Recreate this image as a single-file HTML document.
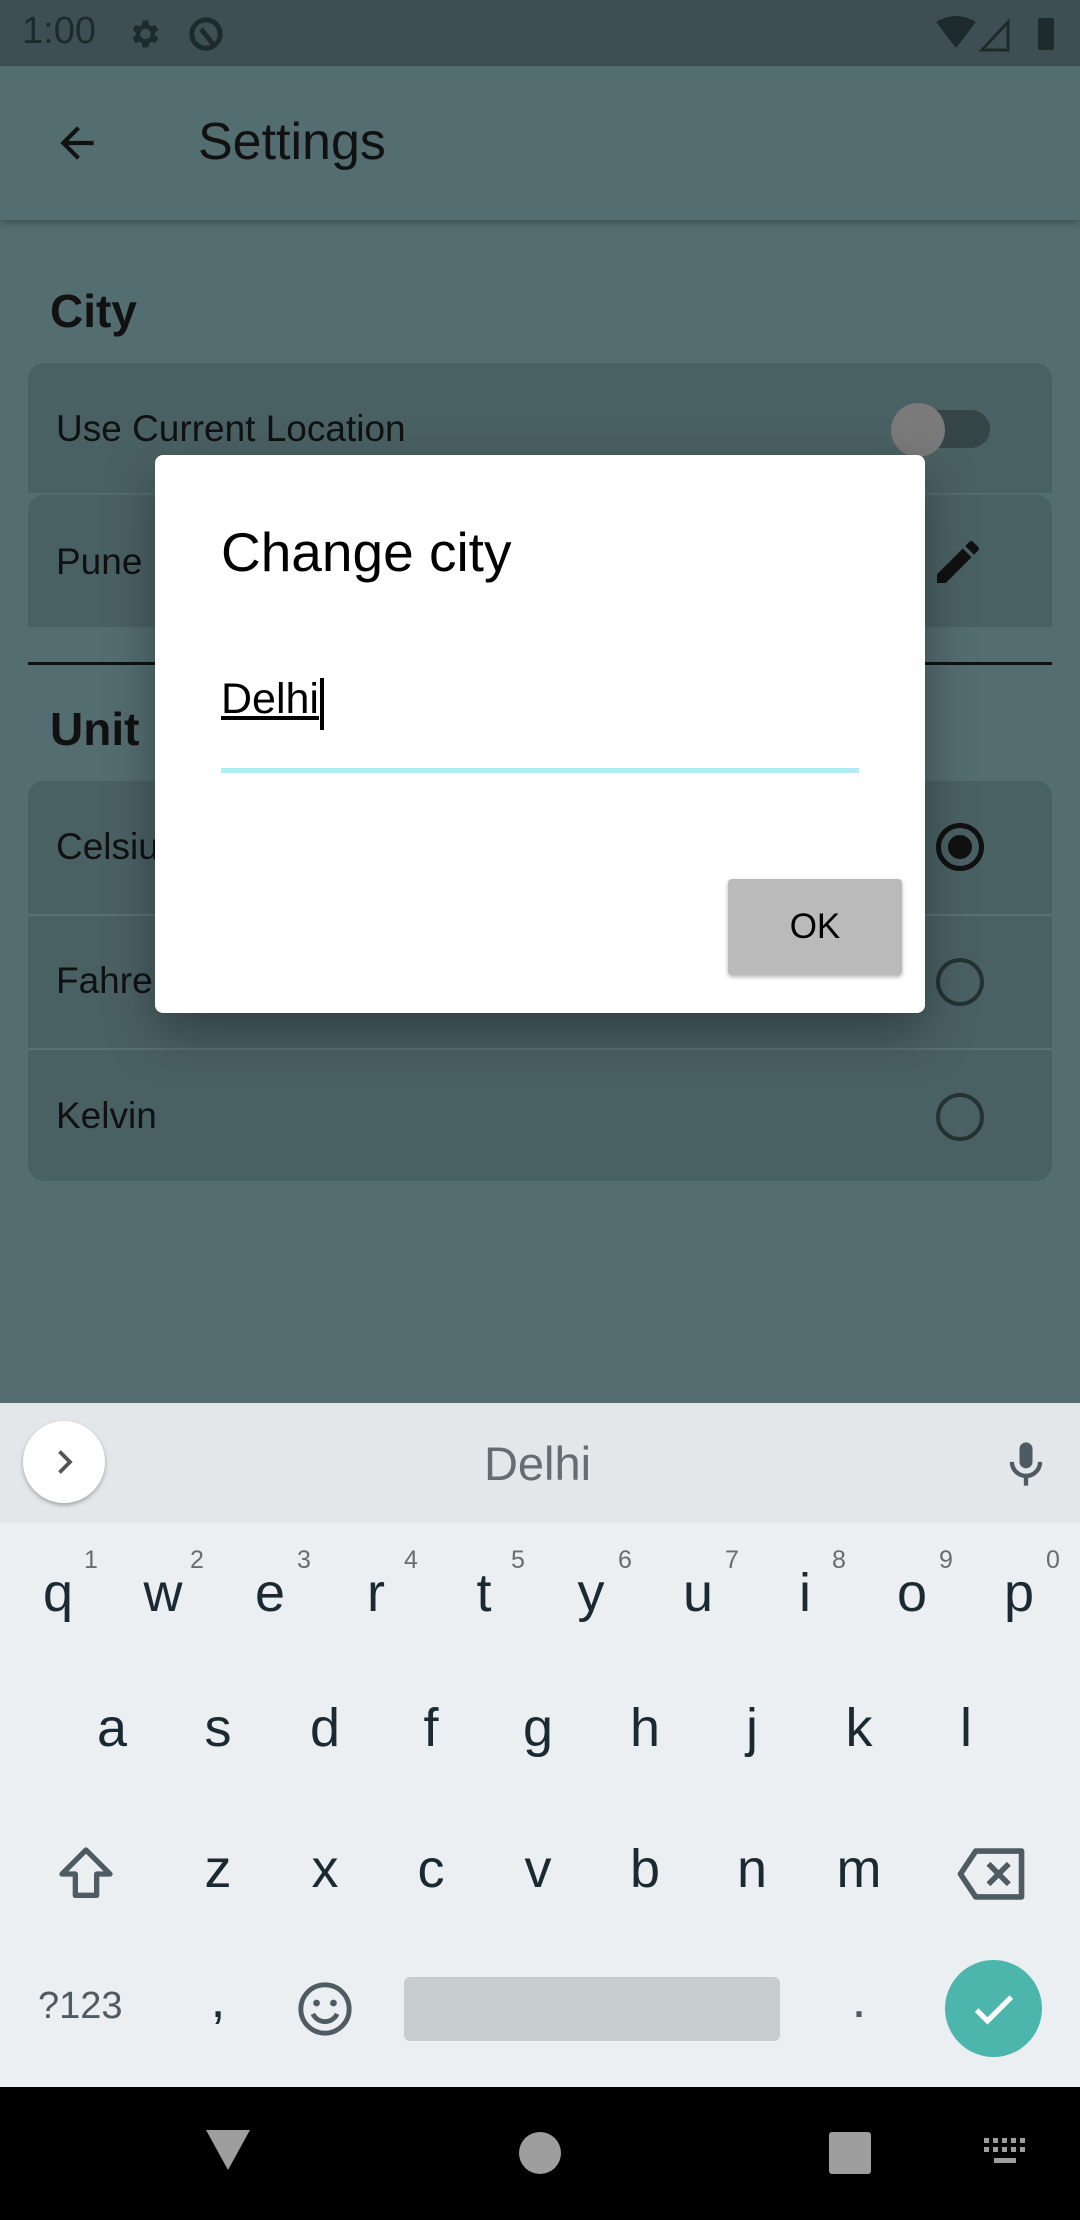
<!DOCTYPE html>
<html><head><meta charset="utf-8"><style>
*{margin:0;padding:0;box-sizing:border-box}
body{width:1080px;height:2220px;position:relative;overflow:hidden;background:#546d70;font-family:"Liberation Sans",sans-serif}
.a{position:absolute}
.t{color:#111;font-size:37px}
.card{background:#4a6164;left:28px;width:1024px}
.k{position:absolute;width:80px;margin-left:-40px;text-align:center;font-size:54px;color:#1a2a33}
.n{position:absolute;font-size:25px;color:#666d72}
</style></head><body>
<div class="a" style="left:0;top:0;width:1080px;height:66px;background:#3d4f52"></div>
<div class="a" style="left:22px;top:10px;font-size:38px;color:#1e2b2d">1:00</div>
<svg class="a" style="left:126px;top:16px" width="36" height="36" viewBox="0 0 24 24"><path fill="#1e2b2d" d="M19.4 13a7.5 7.5 0 000-2l2.1-1.6-2-3.5-2.5 1a7 7 0 00-1.7-1L15 3h-4l-.4 2.9a7 7 0 00-1.7 1l-2.5-1-2 3.5L6.5 11a7.5 7.5 0 000 2l-2.1 1.6 2 3.5 2.5-1a7 7 0 001.7 1L11 21h4l.4-2.9a7 7 0 001.7-1l2.5 1 2-3.5zM13 15.5a3.5 3.5 0 110-7 3.5 3.5 0 010 7z"/></svg>
<svg class="a" style="left:186px;top:14px" width="40" height="40" viewBox="0 0 24 24"><circle cx="12" cy="12" r="8.5" fill="none" stroke="#1e2b2d" stroke-width="3"/><path d="M9 9l8 10" stroke="#1e2b2d" stroke-width="3"/></svg>
<svg class="a" style="left:936px;top:14px" width="130" height="40" viewBox="0 0 130 40"><path d="M0 8Q20 -4 40 8L20 34z" fill="#1e2b2d"/><path d="M46 36L72 8v28z" fill="none" stroke="#1e2b2d" stroke-width="3"/><rect x="102" y="4" width="16" height="32" rx="2" fill="#1e2b2d"/></svg>
<div class="a" style="left:0;top:66px;width:1080px;height:154px;background:#546d70;box-shadow:0 3px 6px rgba(0,0,0,.25)"></div>
<svg class="a" style="left:52px;top:118px" width="50" height="50" viewBox="0 0 24 24"><path d="M20 11H7.8l5.6-5.6L12 4l-8 8 8 8 1.4-1.4L7.8 13H20z" fill="#111"/></svg>
<div class="a" style="left:198px;top:112px;font-size:52px;color:#111">Settings</div>
<div class="a" style="left:50px;top:284px;font-size:46px;font-weight:bold;color:#111">City</div>
<div class="a card" style="top:363px;height:130px;border-radius:16px 16px 0 0"></div>
<div class="a t" style="left:56px;top:408px">Use Current Location</div>
<div class="a" style="left:892px;top:410px;width:98px;height:38px;border-radius:19px;background:#354546"></div>
<div class="a" style="left:891px;top:403px;width:54px;height:54px;border-radius:50%;background:#7a7a7a"></div>
<div class="a card" style="top:495px;height:132px;border-radius:16px 16px 0 0"></div>
<div class="a t" style="left:56px;top:541px">Pune</div>
<svg class="a" style="left:930px;top:534px" width="56" height="56" viewBox="0 0 24 24"><path d="M3 17.25V21h3.75L17.8 9.94l-3.75-3.75zM20.7 7.04a1 1 0 000-1.41l-2.34-2.34a1 1 0 00-1.41 0l-1.83 1.83 3.75 3.75z" fill="#111"/></svg>
<div class="a" style="left:28px;top:662px;width:1024px;height:3px;background:#111"></div>
<div class="a" style="left:50px;top:702px;font-size:46px;font-weight:bold;color:#111">Unit</div>
<div class="a card" style="top:781px;height:400px;border-radius:16px"></div>
<div class="a" style="left:28px;top:914px;width:1024px;height:2px;background:#5a7173"></div>
<div class="a" style="left:28px;top:1048px;width:1024px;height:2px;background:#5a7173"></div>
<div class="a t" style="left:56px;top:826px">Celsius</div>
<div class="a t" style="left:56px;top:960px">Fahrenheit</div>
<div class="a t" style="left:56px;top:1095px">Kelvin</div>
<div class="a" style="left:936px;top:823px;width:48px;height:48px;border:5px solid #111;border-radius:50%"></div>
<div class="a" style="left:948px;top:835px;width:24px;height:24px;background:#111;border-radius:50%"></div>
<div class="a" style="left:936px;top:958px;width:48px;height:48px;border:4px solid #253233;border-radius:50%"></div>
<div class="a" style="left:936px;top:1093px;width:48px;height:48px;border:4px solid #253233;border-radius:50%"></div>
<div class="a" style="left:155px;top:455px;width:770px;height:558px;background:#fff;border-radius:8px;box-shadow:0 20px 50px rgba(0,0,0,.35)"></div>
<div class="a" style="left:221px;top:520px;font-size:55px;color:#000">Change city</div>
<div class="a" style="left:221px;top:675px;font-size:43px;color:#000;text-decoration:underline">Delhi</div>
<div class="a" style="left:320px;top:678px;width:4px;height:52px;background:#000"></div>
<div class="a" style="left:221px;top:768px;width:638px;height:5px;background:#b2ebf2"></div>
<div class="a" style="left:728px;top:879px;width:174px;height:96px;background:#bababa;border-radius:4px;box-shadow:0 2px 4px rgba(0,0,0,.3);text-align:center;line-height:96px;font-size:35px;color:#000">OK</div>
<div class="a" style="left:0;top:1403px;width:1080px;height:120px;background:#e3e7ea"></div>
<div class="a" style="left:23px;top:1421px;width:82px;height:82px;border-radius:50%;background:#fff;box-shadow:0 2px 4px rgba(0,0,0,.3)"></div>
<svg class="a" style="left:46px;top:1444px" width="36" height="36" viewBox="0 0 24 24"><path d="M9 5l7 7-7 7" fill="none" stroke="#555" stroke-width="2.5"/></svg>
<div class="a" style="left:0;top:1436px;width:1075px;text-align:center;font-size:47px;color:#666d72">Delhi</div>
<svg class="a" style="left:1000px;top:1436px" width="52" height="56" viewBox="0 0 24 24"><rect x="9" y="2" width="6" height="12" rx="3" fill="#4f5b62"/><path d="M5.5 11a6.5 6.5 0 0013 0M12 17.5V22" fill="none" stroke="#4f5b62" stroke-width="2"/></svg>
<div class="a" style="left:0;top:1523px;width:1080px;height:564px;background:#eceff1"></div>
<div class="k" style="left:58px;top:1562px">q</div><div class="k" style="left:163px;top:1562px">w</div><div class="k" style="left:270px;top:1562px">e</div><div class="k" style="left:376px;top:1562px">r</div><div class="k" style="left:484px;top:1562px">t</div><div class="k" style="left:591px;top:1562px">y</div><div class="k" style="left:698px;top:1562px">u</div><div class="k" style="left:805px;top:1562px">i</div><div class="k" style="left:912px;top:1562px">o</div><div class="k" style="left:1019px;top:1562px">p</div>
<div class="n" style="left:84px;top:1546px">1</div><div class="n" style="left:190px;top:1546px">2</div><div class="n" style="left:297px;top:1546px">3</div><div class="n" style="left:404px;top:1546px">4</div><div class="n" style="left:511px;top:1546px">5</div><div class="n" style="left:618px;top:1546px">6</div><div class="n" style="left:725px;top:1546px">7</div><div class="n" style="left:832px;top:1546px">8</div><div class="n" style="left:939px;top:1546px">9</div><div class="n" style="left:1046px;top:1546px">0</div>
<div class="k" style="left:112px;top:1697px">a</div><div class="k" style="left:218px;top:1697px">s</div><div class="k" style="left:325px;top:1697px">d</div><div class="k" style="left:431px;top:1697px">f</div><div class="k" style="left:538px;top:1697px">g</div><div class="k" style="left:645px;top:1697px">h</div><div class="k" style="left:752px;top:1697px">j</div><div class="k" style="left:859px;top:1697px">k</div><div class="k" style="left:966px;top:1697px">l</div>
<div class="k" style="left:218px;top:1838px">z</div><div class="k" style="left:325px;top:1838px">x</div><div class="k" style="left:431px;top:1838px">c</div><div class="k" style="left:538px;top:1838px">v</div><div class="k" style="left:645px;top:1838px">b</div><div class="k" style="left:752px;top:1838px">n</div><div class="k" style="left:859px;top:1838px">m</div>
<svg class="a" style="left:54px;top:1842px" width="64" height="64" viewBox="0 0 24 24"><path d="M12 3L3 12h5v8h8v-8h5z" fill="none" stroke="#4f5b62" stroke-width="2" stroke-linejoin="round"/></svg>
<svg class="a" style="left:955px;top:1846px" width="72" height="56" viewBox="0 0 28 22"><path d="M8 2h18v18H8L2 11z" fill="none" stroke="#4f5b62" stroke-width="2.2" stroke-linejoin="round"/><path d="M13 7l8 8M21 7l-8 8" stroke="#4f5b62" stroke-width="2.2"/></svg>
<div class="a" style="left:38px;top:1985px;font-size:38px;color:#4f5b62">?123</div>
<div class="k" style="left:218px;top:1968px">,</div>
<svg class="a" style="left:296px;top:1980px" width="58" height="58" viewBox="0 0 24 24"><circle cx="12" cy="12" r="10" fill="none" stroke="#4f5b62" stroke-width="2"/><circle cx="8.5" cy="9.5" r="1.4" fill="#4f5b62"/><circle cx="15.5" cy="9.5" r="1.4" fill="#4f5b62"/><path d="M7 14a5.5 5.5 0 0010 0" fill="none" stroke="#4f5b62" stroke-width="2"/></svg>
<div class="a" style="left:404px;top:1977px;width:376px;height:64px;background:#c8cdd0;border-radius:6px"></div>
<div class="k" style="left:859px;top:1968px;color:#4f5b62">.</div>
<div class="a" style="left:945px;top:1960px;width:97px;height:97px;border-radius:50%;background:#4db6ac"></div>
<svg class="a" style="left:968px;top:1983px" width="52" height="52" viewBox="0 0 24 24"><path d="M4 12.5l5 5L20 6.5" fill="none" stroke="#fff" stroke-width="2.4"/></svg>
<div class="a" style="left:0;top:2087px;width:1080px;height:133px;background:#000"></div>
<svg class="a" style="left:204px;top:2128px" width="48" height="44" viewBox="0 0 48 44"><path d="M2 2h44L24 42z" fill="#9e9e9e"/></svg>
<div class="a" style="left:519px;top:2132px;width:42px;height:42px;border-radius:50%;background:#9e9e9e"></div>
<div class="a" style="left:829px;top:2132px;width:42px;height:42px;border-radius:3px;background:#9e9e9e"></div>
<svg class="a" style="left:984px;top:2138px" width="44" height="30" viewBox="0 0 44 30"><g fill="#9e9e9e"><rect x="0" y="0" width="5" height="5"/><rect x="9" y="0" width="5" height="5"/><rect x="18" y="0" width="5" height="5"/><rect x="27" y="0" width="5" height="5"/><rect x="36" y="0" width="5" height="5"/><rect x="0" y="9" width="5" height="5"/><rect x="9" y="9" width="5" height="5"/><rect x="18" y="9" width="5" height="5"/><rect x="27" y="9" width="5" height="5"/><rect x="36" y="9" width="5" height="5"/><rect x="10" y="20" width="22" height="5"/></g></svg>
</body></html>
